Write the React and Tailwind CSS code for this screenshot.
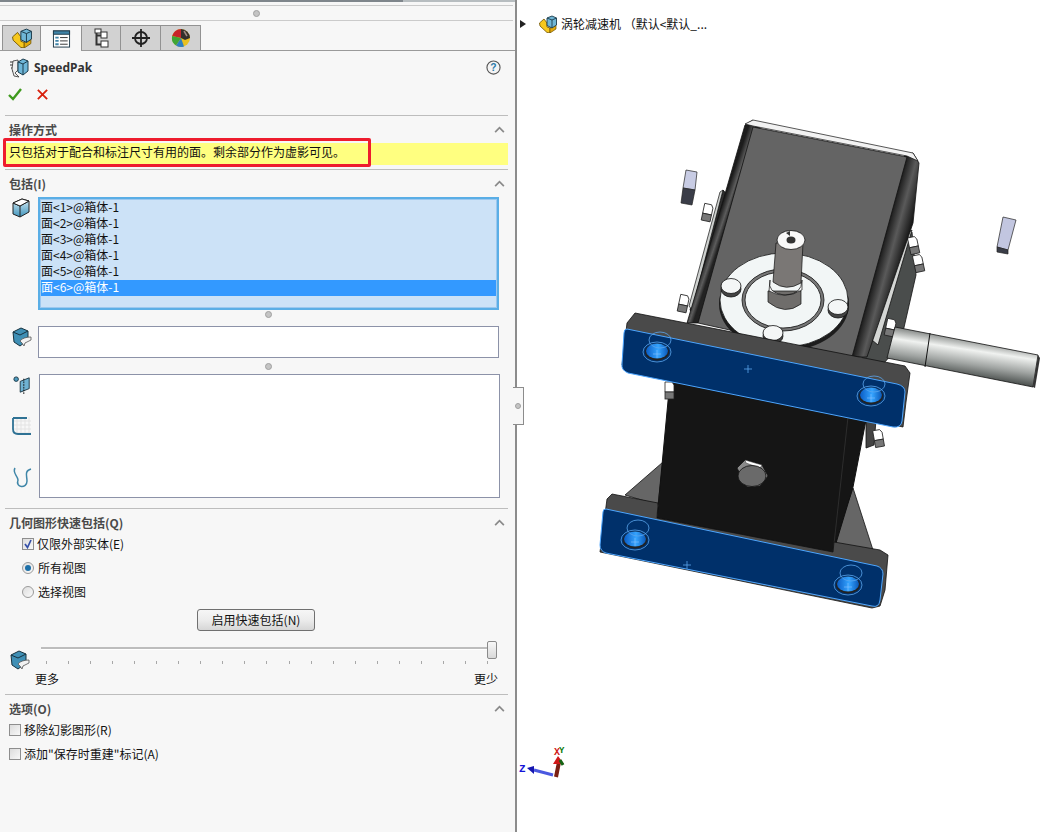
import React from 'react';

const faces = ['面<1>@箱体-1', '面<2>@箱体-1', '面<3>@箱体-1', '面<4>@箱体-1', '面<5>@箱体-1', '面<6>@箱体-1'];
const ticks = Array.from({ length: 21 }, (_, i) => i);

function PartIcon({ className }) {
  return (
    <svg viewBox="0 0 18 18" className={className}>
      <path d="M0.5 8 L5 4 L8 8 L8 12 L11 13 L11 18 L8 17.5 L1 11 Z" fill="#f7c81e" stroke="#6e5200" strokeWidth="0.8" />
      <path d="M11 13 L17 10 L17 14 L11 18 Z" fill="#e3a90a" stroke="#6e5200" strokeWidth="0.7" />
      <path d="M8 3 L13 1 L17.5 3 L17.5 10 L13 13 L8 10.5 Z" fill="#70b6d6" stroke="#1d3c4c" strokeWidth="0.9" />
      <path d="M8 3 L13 5 L17.5 3 M13 5 L13 13" fill="none" stroke="#1d3c4c" strokeWidth="0.9" />
    </svg>
  );
}

function ListIcon() {
  return (
    <svg viewBox="0 0 20 20" className="w-[19px] h-[20px]">
      <rect x="1.5" y="1.5" width="17" height="17" fill="#fff" stroke="#1f3a4a" />
      <rect x="1.5" y="1.5" width="17" height="3.5" fill="#3f84a8" stroke="#1f3a4a" />
      <path d="M3.5 7.5h3.5v2H3.5zM3.5 11h3.5v2H3.5zM3.5 14.5h3.5v2H3.5z" fill="#3f84a8" />
      <path d="M8.5 8.5h8M8.5 12h8M8.5 15.5h8" stroke="#333" />
    </svg>
  );
}

function TreeIcon() {
  return (
    <svg viewBox="0 0 20 20" className="w-[20px] h-[20px]">
      <rect x="4" y="1" width="6" height="4" fill="#fff" stroke="#333" />
      <rect x="10" y="4" width="6" height="6" fill="#fff" stroke="#333" />
      <rect x="10" y="13" width="7" height="6" fill="#fff" stroke="#333" />
      <path d="M5.5 5v11.5H10M5.5 7.5H10" fill="none" stroke="#333" strokeWidth="2" />
    </svg>
  );
}

function TargetIcon() {
  return (
    <svg viewBox="0 0 20 20" className="w-[20px] h-[20px]">
      <circle cx="10" cy="10" r="6" fill="none" stroke="#222" strokeWidth="1.8" />
      <path d="M10 1v18M1 10h18" stroke="#222" strokeWidth="1.8" />
    </svg>
  );
}

function SphereIcon() {
  return (
    <svg viewBox="0 0 20 20" className="w-[20px] h-[20px]">
      <circle cx="10" cy="10" r="9" fill="#e8c020" />
      <path d="M10 10 L10 1 A9 9 0 0 0 1.2 8 Z" fill="#c8242a" />
      <path d="M10 10 L1.2 8 A9 9 0 0 0 5 17.5 Z" fill="#3fa535" />
      <path d="M10 10 L5 17.5 A9 9 0 0 0 13 18.5 Z" fill="#2f7fc0" />
      <path d="M10 1 A9 9 0 0 1 19 10 L14 12 L10 10 Z" fill="#33302c" />
      <path d="M13 3 L16 8" stroke="#a08a80" strokeWidth="1.5" />
    </svg>
  );
}

function SpeedPakIcon() {
  return (
    <svg viewBox="0 0 20 20" className="w-[20px] h-[20px]">
      <path d="M1 4h6M1 7h6M2 10h5M3 13h5" stroke="#333" />
      <path d="M4 3 L9 2 L9 12 L6 15 L10 19 L5 18 L3 11 Z" fill="#eee" stroke="#333" strokeWidth="0.8" />
      <path d="M9 4 L14 1 L19 3 L19 13 L14 17 L9 14 Z" fill="#6fb6d8" stroke="#1d3c4c" />
      <path d="M9 4 L14 6 L19 3 M14 6 L14 17" fill="none" stroke="#1d3c4c" />
    </svg>
  );
}

function CubeIcon() {
  return (
    <svg viewBox="0 0 18 20" className="w-[18px] h-[20px]">
      <defs>
        <linearGradient id="cubeFront" x1="0" y1="0" x2="0" y2="1">
          <stop offset="0" stopColor="#d6ecf5" />
          <stop offset="1" stopColor="#3f94bc" />
        </linearGradient>
      </defs>
      <path d="M1 5 L10 1 L17 3 L17 14 L8 19 L1 16 Z" fill="url(#cubeFront)" stroke="#222" strokeWidth="1" />
      <path d="M1 5 L8 8 L17 3 M8 8 L8 19" fill="none" stroke="#222" strokeWidth="1" />
      <path d="M1 5 L10 1 L17 3 L8 8 Z" fill="#fff" stroke="#222" strokeWidth="1" />
    </svg>
  );
}

function ExcludeIcon() {
  return (
    <svg viewBox="0 0 20 20" className="w-[20px] h-[20px]">
      <path d="M1 5 L9 1 L16 4 L16 13 L8 19 L2 15 Z" fill="#3f8fb5" stroke="#17323f" />
      <path d="M1 5 L8 8 L16 4" fill="none" stroke="#17323f" />
      <path d="M8 14 C10 11 15 10 19 10 L19 13 C17 14 15 15 13 16 L12 19 L10 16 Z" fill="#f2f2f2" stroke="#555" strokeWidth="0.8" />
    </svg>
  );
}

function PlaneIcon() {
  return (
    <svg viewBox="0 0 20 20" className="w-[20px] h-[18px]">
      <circle cx="3.5" cy="3.5" r="2.5" fill="#4f9cc0" stroke="#17323f" />
      <path d="M8 6 L18 2 L18 14 L8 18 Z" fill="#6fb2d2" stroke="#17323f" />
      <path d="M12 3 V20" stroke="#111" strokeDasharray="2 1" />
    </svg>
  );
}

function SurfaceIcon() {
  return (
    <svg viewBox="0 0 20 20" className="w-[20px] h-[20px]">
      <path d="M5 1v18M9 1v18M13 1v18M17 1v18M1 5h18M1 9h18M1 13h18M1 17h18" stroke="#e3e3e3" />
      <path d="M1 2 V13 Q1 18 6 18 H19 M1 2 H15" fill="none" stroke="#2f7294" strokeWidth="1.8" />
    </svg>
  );
}

function CurveIcon() {
  return (
    <svg viewBox="0 0 20 22" className="w-[20px] h-[22px]">
      <path d="M3 1 C0 6 6 9 6 13 C3 21 15 22 15 14 C15 9 12 4 19 2" fill="none" stroke="#3f86a8" strokeWidth="1.5" />
    </svg>
  );
}

function Grip() {
  return <span className="block w-[7px] h-[7px] rounded-full bg-[#c4c4c4] border border-[#a0a0a0]" />;
}

function Chevron() {
  return (
    <svg viewBox="0 0 12 8" className="w-[11px] h-[7px]">
      <path d="M1 7 L6 2 L11 7" fill="none" stroke="#8a8a8a" strokeWidth="2" />
    </svg>
  );
}

function SectionHead({ title }) {
  return (
    <div className="h-[27px] ml-[5px] mr-[7px] border-t border-[#bdbdbd] flex items-center justify-between pl-[4px] pr-[3px] box-content">
      <span className="text-[12px] font-semibold text-[#4a4a4a]">{title}</span>
      <Chevron />
    </div>
  );
}

function CheckBox({ checked }) {
  return (
    <span className="w-[12px] h-[12px] border border-[#8e8e8e] bg-gradient-to-br from-[#dcdcdc] to-[#f8f8f8] flex items-center justify-center">
      {checked && (
        <svg viewBox="0 0 10 10" className="w-[10px] h-[10px]">
          <path d="M2 5 L4.5 8.5 L8 1" fill="none" stroke="#3550a8" strokeWidth="1.7" />
        </svg>
      )}
    </span>
  );
}

function Radio({ checked }) {
  return (
    <span className="w-[12px] h-[12px] rounded-full border border-[#9a9a9a] bg-gradient-to-br from-[#dedede] to-[#fafafa] flex items-center justify-center">
      {checked && <span className="w-[6px] h-[6px] rounded-full bg-[#1c6fa8]" />}
    </span>
  );
}

function Hole({ cx, cy }) {
  return (
    <g>
      <ellipse cx={cx} cy={cy} rx="14" ry="10" fill="#00306a" stroke="#5aa6ee" strokeWidth="0.8" />
      <ellipse cx={cx} cy={cy} rx="12" ry="8.5" fill="#222" />
      <ellipse cx={cx} cy={cy - 1} rx="11" ry="7.5" fill="url(#hole1)" />
      <ellipse cx={cx + 3} cy={cy - 12} rx="11" ry="8" fill="none" stroke="#5aa6ee" strokeWidth="0.8" />
      <path d={`M${cx - 4} ${cy + 2}h8M${cx} ${cy - 2}v8`} stroke="#8cc4ff" strokeWidth="0.6" />
    </g>
  );
}

function Nut({ x, y, r = 0 }) {
  return (
    <g transform={`translate(${x} ${y}) rotate(${r})`}>
      <path d="M-4 -8 L3 -8 L5 -5 L5 2 L-4 2 Z" fill="#fff" stroke="#222" strokeWidth="0.8" />
      <rect x="-4" y="2" width="9" height="7" fill="#777" stroke="#222" strokeWidth="0.8" />
    </g>
  );
}

function Bolt({ x, y }) {
  return (
    <g>
      <ellipse cx={x} cy={y + 3} rx="10" ry="8" fill="#444" stroke="#111" strokeWidth="0.8" />
      <ellipse cx={x} cy={y} rx="10" ry="7.5" fill="#f4f6f6" stroke="#111" strokeWidth="0.8" />
    </g>
  );
}

function Model() {
  return (
    <svg viewBox="516 0 538 832" className="absolute left-[-1px] top-0 w-[538px] h-[832px]">
      <defs>
        <linearGradient id="hole1" x1="0" y1="0" x2="1" y2="0">
          <stop offset="0" stopColor="#0a5cc4" />
          <stop offset="0.55" stopColor="#35a4ff" />
          <stop offset="1" stopColor="#0a58b8" />
        </linearGradient>
        <linearGradient id="shaftR" gradientUnits="userSpaceOnUse" x1="966" y1="335" x2="960" y2="375">
          <stop offset="0" stopColor="#6a6e6c" />
          <stop offset="0.35" stopColor="#f0f2f0" />
          <stop offset="0.7" stopColor="#a0a4a2" />
          <stop offset="1" stopColor="#4f5452" />
        </linearGradient>
        <linearGradient id="wallL" gradientUnits="userSpaceOnUse" x1="724" y1="200" x2="733" y2="203">
          <stop offset="0" stopColor="#1c1c1c" />
          <stop offset="0.6" stopColor="#5c5c5c" />
          <stop offset="1" stopColor="#222" />
        </linearGradient>
        <linearGradient id="wallR" gradientUnits="userSpaceOnUse" x1="895" y1="200" x2="917" y2="206">
          <stop offset="0" stopColor="#1c1c1c" />
          <stop offset="0.45" stopColor="#5a5a5a" />
          <stop offset="1" stopColor="#161616" />
        </linearGradient>
      </defs>

      {/* keys */}
      <path d="M686 170 L697 172 L695 190 L683 188 Z" fill="#c8cce4" stroke="#222" strokeWidth="0.7" />
      <path d="M683 188 L695 190 L692 205 L681 203 Z" fill="#3a3d48" stroke="#222" strokeWidth="0.7" />
      <path d="M1003 217 L1016 220 L1008 250 L997 247 Z" fill="#c2c6e0" stroke="#222" strokeWidth="0.7" />
      <path d="M997 247 L1008 250 L1008 254 L997 252 Z" fill="#3a3d48" stroke="#222" strokeWidth="0.7" />

      {/* side plates */}
      <path d="M723 190 L690 310 L700 322 L732 200 Z" fill="#2e2e2e" stroke="#111" strokeWidth="0.8" />
      <path d="M723 190 L720 192 L689 306 L692 310 Z" fill="#cfd2d0" stroke="#111" strokeWidth="0.7" />
      <path d="M912 232 L916 275 L900 345 L876 372 L862 360 L890 250 Z" fill="#4a4d4c" stroke="#111" strokeWidth="0.8" />
      <path d="M912 230 L904 236 L872 340 L878 345 Z" fill="#d4d6d4" stroke="#111" strokeWidth="0.8" />
      <Nut x={707} y={212} r={12} />
      <Nut x={683} y={303} r={12} />
      <Nut x={913} y={245} r={-12} />
      <Nut x={918} y={263} r={-12} />
      <Nut x={890} y={327} r={12} />

      {/* gearbox body */}
      <path d="M745 125 L753 120 L760 128 L698 323 L687 323 L727 187 Z" fill="url(#wallL)" stroke="#111" strokeWidth="0.8" />
      <path d="M905 155 L913 153 L919 163 L913 223 L867 357 L850 357 Z" fill="url(#wallR)" stroke="#111" strokeWidth="0.8" />
      <path d="M753 127 L907 157 L852 357 L698 323 Z" fill="#646464" stroke="#111" strokeWidth="0.8" />
      <path d="M745 124 L753 120 L913 153 L918 161 L907 156 L753 126 Z" fill="#f2f2f2" stroke="#111" strokeWidth="0.7" />

      {/* disc and output shaft */}
      <ellipse cx="784" cy="304" rx="65" ry="47" fill="#1d1d1d" />
      <ellipse cx="784" cy="300" rx="64" ry="47" fill="#f2f6f6" stroke="#111" strokeWidth="0.8" />
      <ellipse cx="783" cy="300" rx="41" ry="31" fill="#777" stroke="#111" strokeWidth="0.8" />
      <ellipse cx="783" cy="300" rx="38" ry="28" fill="#f2f6f6" stroke="#111" strokeWidth="0.8" />
      <Bolt x={731} y={286} />
      <Bolt x={838} y={307} />
      <Bolt x={773} y={333} />
      <path d="M768 291 L768 302 Q785 316 801 304 L801 291 Z" fill="#6f6d6b" stroke="#111" strokeWidth="0.7" />
      <path d="M770 280 Q767 293 784 295 Q802 295 802 280 L802 290 Q785 300 769 291 Z" fill="#f4f4f4" stroke="#111" strokeWidth="0.7" />
      <path d="M776 243 L803 243 L801 283 Q786 292 773 282 Z" fill="#7a7775" stroke="#111" strokeWidth="0.7" />
      <ellipse cx="791" cy="240" rx="14" ry="9.5" fill="#f8f8f8" stroke="#111" strokeWidth="0.8" />
      <ellipse cx="791" cy="240" rx="4.5" ry="3.5" fill="#333" />
      <path d="M786 233 L790 231 L790 236 Z" fill="#333" />

      {/* lower body */}
      <path d="M625 495 L663 462 L658 505 Z" fill="#666" stroke="#111" strokeWidth="0.8" />
      <path d="M853 488 L873 550 L833 544 Z" fill="#666" stroke="#111" strokeWidth="0.8" />
      <path d="M670 380 L866 420 L853 487 L833 553 L657 518 Z" fill="#151515" stroke="#111" />
      <path d="M848 417 L833 553" stroke="#333" strokeWidth="0.8" />
      <path d="M866 418 L876 420 L874 445 L866 448 Z" fill="#444" stroke="#111" strokeWidth="0.8" />
      <Nut x={669} y={390} />
      <Nut x={878} y={438} r={-10} />
      <path d="M737 468 L745 460 L762 465 L768 476 L760 486 L747 487 Z" fill="#8a8a8a" stroke="#111" strokeWidth="0.8" />
      <path d="M745 460 L762 465 L760 468 L746 463 Z" fill="#fff" stroke="#333" strokeWidth="0.5" />
      <ellipse cx="752" cy="476" rx="14" ry="10.5" fill="#6a6a6a" stroke="#111" strokeWidth="0.8" />

      {/* right input shaft */}
      <path d="M895 327 L1038 355 L1033 387 L887 358 Z" fill="url(#shaftR)" stroke="#111" strokeWidth="0.8" />
      <path d="M930 333 L925 367" stroke="#111" />
      <path d="M1038 355 L1040 358 L1035 388 L1033 387 Z" fill="#333" />

      {/* upper flange */}
      <path d="M627 323 L635 313 L905 366 L910 373 L906 402 L903 427 L622 365 Z" fill="#4a4a4a" stroke="#111" strokeWidth="0.8" />
      <path d="M627 329 L897 384 Q905 386 905 392 L902 421 Q901 428 893 427 L628 373 Q621 370 622 364 L624 333 Q624 329 627 329 Z" fill="#00306a" stroke="#4da6ff" strokeWidth="1" />
      <path d="M744 369h8M748 365v8" stroke="#5aa6ee" strokeWidth="0.8" />
      <Hole cx={657} cy={352} />
      <Hole cx={871} cy={396} />

      {/* lower flange */}
      <path d="M607 499 L612 494 L658 503 L657 518 L833 552 L834 542 L880 550 L888 555 L885 590 L880 606 L872 608 L600 552 Z" fill="#4a4a4a" stroke="#111" strokeWidth="0.8" />
      <path d="M606 509 L877 566 Q883 568 883 574 L880 600 Q879 608 872 606 L606 553 Q600 551 600 545 L603 512 Q603 509 606 509 Z" fill="#00306a" stroke="#4da6ff" strokeWidth="1" />
      <path d="M683 565h8M687 561v8" stroke="#5aa6ee" strokeWidth="0.8" />
      <Hole cx={635} cy={540} />
      <Hole cx={848} cy={585} />

      {/* triad */}
      <path d="M556 777 L559 762" stroke="#7a1f14" strokeWidth="4" />
      <path d="M553 764 L558 756 L564 764 Z" fill="#d01818" />
      <path d="M560 760 L563 765" stroke="#146414" strokeWidth="3" />
      <path d="M553 775 L534 770" stroke="#4a58e0" strokeWidth="3" />
      <path d="M534 766 L527 768 L534 774 Z" fill="#1616b0" />
      <text x="519" y="772" fontFamily="Liberation Mono" fontSize="11" fontWeight="700" fill="#1414d8">Z</text>
      <text x="554" y="755" fontFamily="Liberation Mono" fontSize="10" fontWeight="700" fill="#d01818">X</text>
      <text x="559" y="753" fontFamily="Liberation Mono" fontSize="9" fontWeight="700" fill="#0c7a0c">Y</text>
    </svg>
  );
}

export default function App() {
  return (
    <div className="flex w-[1054px] h-[832px] bg-white overflow-hidden text-[12px] text-[#111] font-['Noto_Sans_CJK_SC','Liberation_Sans',sans-serif] leading-none">
      <aside className="relative w-[517px] h-full shrink-0 bg-[#f7f7f7] border-r-2 border-[#8c8c8c] flex flex-col">
        {/* top strip */}
        <div className="h-[2px] flex">
          <div className="w-[403px] bg-[#7f868c]" />
          <div className="flex-1 bg-[#b7bdc0]" />
        </div>
        <div className="h-[16px] mt-[3px] mr-[2px] border-t border-b border-[#cbcbcb] flex items-center justify-center">
          <Grip />
        </div>

        {/* tabs */}
        <div className="h-[30px] pt-[4px] pl-[2px] border-b border-[#9a9a9a] flex items-end">
          <div className="w-[39px] h-[25px] bg-[#d2d2d2] border border-b-0 border-[#929292] flex items-center justify-center"><PartIcon className="w-[20px] h-[20px]" /></div>
          <div className="w-[40px] h-[26px] -mb-px bg-[#f7f7f7] border-t border-[#929292] flex items-center justify-center"><ListIcon /></div>
          <div className="w-[40px] h-[25px] bg-[#d2d2d2] border border-b-0 border-[#929292] flex items-center justify-center"><TreeIcon /></div>
          <div className="w-[40px] h-[25px] bg-[#d2d2d2] border-t border-r border-[#929292] flex items-center justify-center"><TargetIcon /></div>
          <div className="w-[40px] h-[25px] bg-[#d2d2d2] border-t border-r border-[#929292] flex items-center justify-center"><SphereIcon /></div>
        </div>

        {/* title */}
        <div className="h-[64px] pl-[9px] pr-[14px] pt-[6px]">
          <div className="flex items-center justify-between h-[22px]">
            <div className="flex items-center gap-[5px]">
              <SpeedPakIcon />
              <span className="font-['Noto_Sans','Liberation_Sans',sans-serif] font-bold text-[12px] text-[#333]">SpeedPak</span>
            </div>
            <svg viewBox="0 0 16 16" className="w-[15px] h-[15px] -mt-[1px]">
              <circle cx="8" cy="8" r="7" fill="#f4f4f4" stroke="#555" strokeWidth="1.2" />
              <text x="8" y="12" textAnchor="middle" fontSize="11" fontWeight="700" fontFamily="Liberation Sans" fill="#2a7aa8">?</text>
            </svg>
          </div>
          <div className="flex items-center gap-[14px] mt-[5px] h-[20px] -ml-[1px]">
            <svg viewBox="0 0 14 14" className="w-[14px] h-[14px]">
              <path d="M1 8 L5 12 L13 2" fill="none" stroke="#3f9a1e" strokeWidth="2.4" />
            </svg>
            <svg viewBox="0 0 14 14" className="w-[13px] h-[13px]">
              <path d="M2 2 L12 12 M12 2 L2 12" fill="none" stroke="#d8200c" strokeWidth="2" />
            </svg>
          </div>
        </div>

        {/* how it works */}
        <SectionHead title="操作方式" />
        <div className="relative ml-[5px] mr-[7px] h-[22px] bg-[#ffff80] flex items-center pl-[4px] pb-[5px]">
          <span>只包括对于配合和标注尺寸有用的面。剩余部分作为虚影可见。</span>
          <div className="absolute left-[-2px] top-[-5px] w-[368px] h-[29px] border-[3px] border-[#ee1c2e] rounded-[2px]" />
        </div>
        <div className="h-[4px]" />

        {/* include */}
        <SectionHead title="包括(I)" />
        <div className="flex pl-[12px]">
          <div className="w-[26px] pt-[1px]"><CubeIcon /></div>
          <div className="w-[461px] h-[113px] border-2 border-[#5aaee6]">
            <div className="h-full border border-[#9cc8ef] bg-[#cce2f7]">
              {faces.map((face, i) => (
                <div key={face} className={`h-[16px] flex items-center pb-[2px] ${i === 5 ? 'bg-[#3399ff] text-white' : ''}`}>
                  {face}
                </div>
              ))}
            </div>
          </div>
        </div>
        <div className="h-[16px] pt-[1px] pl-[265px]"><Grip /></div>
        <div className="flex pl-[12px]">
          <div className="w-[26px] pt-[1px]"><ExcludeIcon /></div>
          <div className="w-[461px] h-[32px] border border-[#8c92a8] bg-white" />
        </div>
        <div className="h-[16px] pl-[265px] flex items-center"><Grip /></div>
        <div className="flex pl-[12px] h-[124px]">
          <div className="w-[27px] flex flex-col pt-[2px]">
            <PlaneIcon />
            <div className="mt-[22px]"><SurfaceIcon /></div>
            <div className="mt-[31px]"><CurveIcon /></div>
          </div>
          <div className="w-[461px] h-[124px] border border-[#8c92a8] bg-white" />
        </div>
        <div className="h-[10px]" />

        {/* quick include */}
        <SectionHead title="几何图形快速包括(Q)" />
        <div className="pl-[22px] flex flex-col">
          <label className="h-[16px] flex items-center gap-[3px]"><CheckBox checked /><span>仅限外部实体(E)</span></label>
          <label className="h-[16px] mt-[8px] flex items-center gap-[4px]"><Radio checked /><span>所有视图</span></label>
          <label className="h-[16px] mt-[8px] flex items-center gap-[4px]"><Radio /><span>选择视图</span></label>
        </div>
        <div className="mt-[9px] pl-[197px]">
          <button className="w-[118px] h-[22px] rounded-[3px] border border-[#707070] bg-gradient-to-b from-[#f6f6f6] via-[#ececec] to-[#d6d6d6] text-[12px]">启用快速包括(N)</button>
        </div>
        <div className="relative flex pl-[10px] mt-[10px] h-[53px]">
          <div className="w-[31px] pt-[9px]"><ExcludeIcon /></div>
          <div className="w-[456px] pt-[6px]">
            <div className="h-[2px] bg-[#bdbdbd] border-b border-white box-content" />
            <div className="flex justify-between pl-[5px] pr-[9px] mt-[11px]">
              {ticks.map(t => <span key={t} className="w-px h-[3px] bg-[#a8a8a8]" />)}
            </div>
            <div className="flex justify-between mt-[9px] -mr-[1px] -ml-[6px]">
              <span>更多</span>
              <span>更少</span>
            </div>
          </div>
          <div className="absolute left-[487px] top-0 w-[10px] h-[18px] bg-gradient-to-b from-[#f8f8f8] to-[#d8d8d8] border border-[#8a8a8a] rounded-[2px]" />
        </div>

        {/* options */}
        <div className="-mb-[1px]">
          <SectionHead title="选项(O)" />
        </div>
        <div className="pl-[9px] pt-[1px] flex flex-col">
          <label className="h-[16px] flex items-center gap-[3px]"><CheckBox /><span>移除幻影图形(R)</span></label>
          <label className="h-[16px] mt-[8px] flex items-center gap-[3px]"><CheckBox /><span>添加"保存时重建"标记(A)</span></label>
        </div>

        {/* collapse handle */}
        <div className="absolute left-[513px] top-[387px] w-[11px] h-[38px] bg-[#f7f7f7] border-y border-r border-[#8c8c8c] flex items-center justify-center">
          <span className="block w-[6px] h-[6px] rounded-full bg-[#c4c4c4] border border-[#a0a0a0]" />
        </div>
      </aside>

      <main className="relative flex-1 h-full">
        <Model />
        <div className="absolute left-[3px] top-[15px] flex items-center h-[18px]">
          <svg viewBox="0 0 6 8" className="w-[6px] h-[8px]"><path d="M0 0 L6 4 L0 8 Z" fill="#222" /></svg>
          <PartIcon className="w-[18px] h-[18px] ml-[13px]" />
          <span className="ml-[4px]">涡轮减速机 （默认&lt;默认_...</span>
        </div>
      </main>
    </div>
  );
}
